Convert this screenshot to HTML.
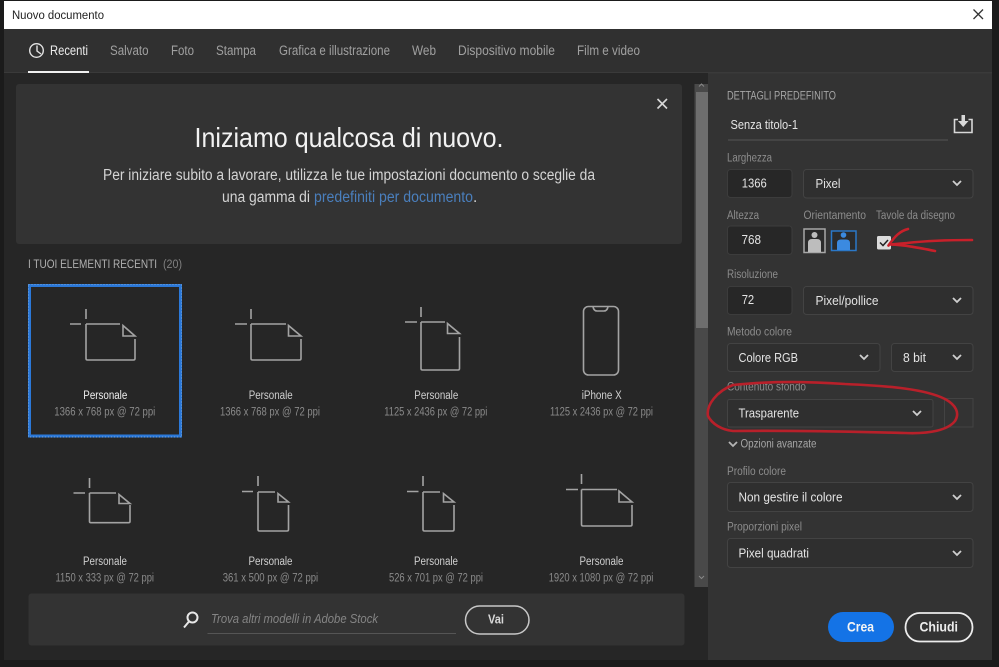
<!DOCTYPE html>
<html lang="it"><head><meta charset="utf-8"><title>Nuovo documento</title>
<style>
html,body{margin:0;padding:0;background:#1b1b1b;width:999px;height:667px;overflow:hidden}
svg{display:block;filter:blur(.3px)}
text{font-family:"Liberation Sans",sans-serif}
.tab{font-size:13.5px;fill:#a0a0a0}
.lab{font-size:11.5px;fill:#8c8c8c}
.val{font-size:13px;fill:#e4e4e4}
.nm{font-size:11.5px;fill:#cfcfcf}
.sz{font-size:11.5px;fill:#8a8a8a}
.ic{fill:none;stroke:#a3a3a3;stroke-width:1.6}
.chev{fill:none;stroke:#cfcfcf;stroke-width:1.8}
.inp{fill:#272727;stroke:#3c3c3c}
.sel{fill:#2f2f2f;stroke:#434343}
</style></head><body>
<svg width="999" height="667" viewBox="0 0 999 667" xmlns="http://www.w3.org/2000/svg">
<rect width="999" height="667" fill="#1b1b1b"/>
<!-- title bar -->
<rect x="4" y="1" width="988" height="28" fill="#fff"/>
<text x="12" y="19" font-size="11.500" fill="#222" textLength="92" lengthAdjust="spacingAndGlyphs">Nuovo documento</text>
<path d="M973.500 9.500 983 19M983 9.500 973.500 19" stroke="#333" stroke-width="1.300" fill="none"/>
<!-- tab bar -->
<rect x="4" y="29" width="988" height="43" fill="#303030"/>
<rect x="4" y="72" width="988" height="1.500" fill="#3a3a3a"/>
<rect x="4" y="73" width="704" height="587" fill="#262626"/>
<circle cx="36.500" cy="50.500" r="6.800" fill="none" stroke="#e2e2e2" stroke-width="1.400"/>
<path d="M37 45.500V51L41 54" fill="none" stroke="#e2e2e2" stroke-width="1.400"/>
<text x="50" y="55" class="tab" style="fill:#ececec" textLength="38" lengthAdjust="spacingAndGlyphs">Recenti</text>
<text x="110" y="55" class="tab" textLength="38.500" lengthAdjust="spacingAndGlyphs">Salvato</text>
<text x="171" y="55" class="tab" textLength="23" lengthAdjust="spacingAndGlyphs">Foto</text>
<text x="216" y="55" class="tab" textLength="40" lengthAdjust="spacingAndGlyphs">Stampa</text>
<text x="279" y="55" class="tab" textLength="111" lengthAdjust="spacingAndGlyphs">Grafica e illustrazione</text>
<text x="412" y="55" class="tab" textLength="24" lengthAdjust="spacingAndGlyphs">Web</text>
<text x="458" y="55" class="tab" textLength="97" lengthAdjust="spacingAndGlyphs">Dispositivo mobile</text>
<text x="577" y="55" class="tab" textLength="63" lengthAdjust="spacingAndGlyphs">Film e video</text>
<rect x="28" y="71" width="61" height="2" fill="#f0f0f0"/>
<!-- hero -->
<rect x="16" y="84" width="666" height="160" rx="3" fill="#333"/>
<path d="M657.500 99 667 108.500M667 99 657.500 108.500" stroke="#d8d8d8" stroke-width="1.600" fill="none"/>
<text x="194.500" y="147" font-size="28" fill="#f2f2f2" textLength="309" lengthAdjust="spacingAndGlyphs">Iniziamo qualcosa di nuovo.</text>
<text x="103" y="180" font-size="15.500" fill="#d4d4d4" textLength="492" lengthAdjust="spacingAndGlyphs">Per iniziare subito a lavorare, utilizza le tue impostazioni documento o sceglie da</text>
<text x="222" y="202" font-size="15.500" fill="#d4d4d4" textLength="88" lengthAdjust="spacingAndGlyphs">una gamma di</text>
<text x="314" y="202" font-size="15.500" fill="#4a7fbd" textLength="159" lengthAdjust="spacingAndGlyphs">predefiniti per documento</text>
<text x="473" y="202" font-size="15.500" fill="#d4d4d4">.</text>
<!-- recent heading -->
<text x="28" y="268" font-size="11.500" fill="#b0b0b0" textLength="129" lengthAdjust="spacingAndGlyphs">I TUOI ELEMENTI RECENTI</text>
<text x="163" y="268" font-size="11.500" fill="#808080" textLength="19" lengthAdjust="spacingAndGlyphs">(20)</text>
<!-- selected -->
<rect x="29.500" y="285.500" width="151" height="150.500" fill="none" stroke="#2b78d8" stroke-width="3"/>
<rect x="28.500" y="284.500" width="153" height="152.500" fill="none" stroke="#7aa6d8" stroke-width="1" stroke-dasharray="1 2"/>
<!-- icons -->
<g class="ic">
<path d="M86 309V319M70 324H81M86 324H120M86 324V358.500Q86 360 87.500 360H133.500Q135 360 135 358.500V339M123 325.500V336H135Z"/>
<path d="M251 309V319M235 324H247M251 324H286M251 324V358.500Q251 360 252.500 360H299.500Q301 360 301 358.500V339M288.500 325.500V336H301Z"/>
<path d="M421 307V317M405 322H417M421 322H445M421 322V368.500Q421 370 422.500 370H458Q459.500 370 459.500 368.500V337M447.500 323.500V333.500H459.500Z"/>
<rect x="583.500" y="306.500" width="35" height="68.500" rx="5"/>
<path d="M593 307Q594 311 597 311H604Q607 311 608 307"/>
<path d="M89.500 478V488M73.500 493H85M89.500 493H116M89.500 493V521.500Q89.500 522.700 91 522.700H128.500Q130 522.700 130 521.500V505M119 494.500V503.500H130Z"/>
<path d="M258 476V486M242 491.500H253M258 492H275M258 492V529.500Q258 531 259.500 531H287Q288.500 531 288.500 529.500V505M278 493.500V502H288.500Z"/>
<path d="M423 476V486M407 491.500H418.500M423 492H440M423 492V529.500Q423 531 424.500 531H452.500Q454 531 454 529.500V505M443.500 493.500V502H454Z"/>
<path d="M581.500 474V484M566 489.500H578M581.500 489.500H617M581.500 489.500V524.500Q581.500 526 583 526H630.500Q632 526 632 524.500V505M619 491V502H632Z"/>
</g>
<!-- labels row 1 -->
<text x="83.300" y="399" class="nm" style="fill:#eee" textLength="44" lengthAdjust="spacingAndGlyphs">Personale</text>
<text x="54.300" y="415.700" class="sz" textLength="101" lengthAdjust="spacingAndGlyphs">1366 x 768 px @ 72 ppi</text>
<text x="248.700" y="399" class="nm" textLength="44" lengthAdjust="spacingAndGlyphs">Personale</text>
<text x="220" y="415.700" class="sz" textLength="100" lengthAdjust="spacingAndGlyphs">1366 x 768 px @ 72 ppi</text>
<text x="414.300" y="399" class="nm" textLength="44" lengthAdjust="spacingAndGlyphs">Personale</text>
<text x="384.300" y="415.700" class="sz" textLength="103" lengthAdjust="spacingAndGlyphs">1125 x 2436 px @ 72 ppi</text>
<text x="581.700" y="399" class="nm" textLength="40" lengthAdjust="spacingAndGlyphs">iPhone X</text>
<text x="550" y="415.700" class="sz" textLength="103" lengthAdjust="spacingAndGlyphs">1125 x 2436 px @ 72 ppi</text>
<!-- labels row 2 -->
<text x="83" y="565" class="nm" textLength="44" lengthAdjust="spacingAndGlyphs">Personale</text>
<text x="55.500" y="581.600" class="sz" textLength="98.500" lengthAdjust="spacingAndGlyphs">1150 x 333 px @ 72 ppi</text>
<text x="248.500" y="565" class="nm" textLength="44" lengthAdjust="spacingAndGlyphs">Personale</text>
<text x="222.700" y="581.600" class="sz" textLength="95.500" lengthAdjust="spacingAndGlyphs">361 x 500 px @ 72 ppi</text>
<text x="414" y="565" class="nm" textLength="44" lengthAdjust="spacingAndGlyphs">Personale</text>
<text x="389" y="581.600" class="sz" textLength="94" lengthAdjust="spacingAndGlyphs">526 x 701 px @ 72 ppi</text>
<text x="579.500" y="565" class="nm" textLength="44" lengthAdjust="spacingAndGlyphs">Personale</text>
<text x="548.700" y="581.600" class="sz" textLength="104.700" lengthAdjust="spacingAndGlyphs">1920 x 1080 px @ 72 ppi</text>
<!-- scrollbar -->
<rect x="694.500" y="84" width="13.500" height="503" fill="#494949"/>
<rect x="696" y="92" width="12" height="236" fill="#6e6e6e"/>
<path d="M699 86.500 701.500 84 704 86.500M699 576 701.500 578.500 704 576" fill="none" stroke="#888" stroke-width="1"/>
<!-- search -->
<rect x="28.500" y="593.500" width="656" height="52" rx="3" fill="#333"/>
<circle cx="192.500" cy="617.500" r="5" fill="none" stroke="#e8e8e8" stroke-width="2"/>
<path d="M189 621.500 184 627.500" stroke="#e8e8e8" stroke-width="2" fill="none"/>
<text x="211" y="623" font-size="13" font-style="italic" fill="#858585" textLength="167" lengthAdjust="spacingAndGlyphs">Trova altri modelli in Adobe Stock</text>
<rect x="207.500" y="633" width="248.500" height="1" fill="#555"/>
<rect x="465.500" y="606" width="63.500" height="28" rx="14" fill="none" stroke="#c8c8c8" stroke-width="1.500"/>
<text x="488" y="623.500" font-size="12.500" font-weight="bold" fill="#d8d8d8" textLength="16" lengthAdjust="spacingAndGlyphs">Vai</text>
<!-- right panel -->
<rect x="708" y="73.500" width="284" height="586.500" fill="#333"/>
<text x="727" y="99.500" class="lab" style="fill:#a6a6a6" textLength="109" lengthAdjust="spacingAndGlyphs">DETTAGLI PREDEFINITO</text>
<text x="730.500" y="129" class="val" textLength="67.500" lengthAdjust="spacingAndGlyphs">Senza titolo-1</text>
<rect x="728" y="139.500" width="220" height="1" fill="#555"/>
<path d="M958 119.500H954.500V132.500H972V119.500H968.500" fill="none" stroke="#d8d8d8" stroke-width="1.600"/>
<path d="M961.500 115H965V121H968.500L963.200 127 958 121H961.500Z" fill="#d8d8d8"/>

<text x="727" y="161.700" class="lab" textLength="45" lengthAdjust="spacingAndGlyphs">Larghezza</text>
<rect x="727.500" y="169.500" width="64.500" height="28" rx="3" class="inp"/>
<text x="741.700" y="187.500" class="val" textLength="25" lengthAdjust="spacingAndGlyphs">1366</text>
<rect x="803.500" y="169.500" width="169.500" height="28.500" rx="3" class="sel"/>
<text x="815.500" y="188" class="val" textLength="25" lengthAdjust="spacingAndGlyphs">Pixel</text>
<path d="M953 181 957 185 961 181" class="chev"/>

<text x="727" y="219" class="lab" textLength="32" lengthAdjust="spacingAndGlyphs">Altezza</text>
<text x="803.500" y="219" class="lab" textLength="62.500" lengthAdjust="spacingAndGlyphs">Orientamento</text>
<text x="876" y="219" class="lab" textLength="79" lengthAdjust="spacingAndGlyphs">Tavole da disegno</text>
<rect x="727.500" y="226" width="64.500" height="28.500" rx="3" class="inp"/>
<text x="741.500" y="244" class="val" textLength="19.500" lengthAdjust="spacingAndGlyphs">768</text>
<rect x="804" y="229" width="21" height="23.500" fill="#2b2b2b" stroke="#a8a8a8" stroke-width="1.500"/>
<circle cx="814.500" cy="235" r="3" fill="#bdbdbd"/>
<path d="M808 252V243Q808 239 812 239H817Q821 239 821 243V252Z" fill="#bdbdbd"/>
<rect x="831.500" y="231" width="24.500" height="19.500" fill="#2b2b2b" stroke="#2b78c8" stroke-width="1.500"/>
<circle cx="843.500" cy="235" r="2.800" fill="#3b8ae0"/>
<path d="M837 250V243Q837 239.500 841 239.500H846Q850 239.500 850 243V250Z" fill="#3b8ae0"/>
<rect x="877" y="236" width="14" height="13.500" rx="1.500" fill="#dcdcdc"/>
<path d="M880 242.500 883 245.500 888 240" fill="none" stroke="#222" stroke-width="1.500"/>
<path d="M972 240C950 240 925 241 907 243L890 244.500M908 229C900 231 895 236 888.500 245.500M890 244.500C905 245 920 248 935 251" fill="none" stroke="#c8202a" stroke-width="2.600" stroke-linecap="round" stroke-linejoin="round"/>

<text x="727" y="278" class="lab" textLength="51" lengthAdjust="spacingAndGlyphs">Risoluzione</text>
<rect x="727.500" y="286.500" width="64.500" height="28" rx="3" class="inp"/>
<text x="741.700" y="304" class="val" textLength="12.500" lengthAdjust="spacingAndGlyphs">72</text>
<rect x="803.500" y="286.500" width="169.500" height="28" rx="3" class="sel"/>
<text x="815.500" y="305" class="val" textLength="63" lengthAdjust="spacingAndGlyphs">Pixel/pollice</text>
<path d="M953 298 957 302 961 298" class="chev"/>

<text x="727" y="335.700" class="lab" textLength="65" lengthAdjust="spacingAndGlyphs">Metodo colore</text>
<rect x="727.500" y="343.500" width="152.500" height="28" rx="3" class="sel"/>
<text x="738.500" y="362" class="val" textLength="59.500" lengthAdjust="spacingAndGlyphs">Colore RGB</text>
<path d="M860 355 864 359 868 355" class="chev"/>
<rect x="891.500" y="343.500" width="81.500" height="28" rx="3" class="sel"/>
<text x="903" y="362" class="val" textLength="23" lengthAdjust="spacingAndGlyphs">8 bit</text>
<path d="M953 355 957 359 961 355" class="chev"/>

<text x="727" y="390.700" class="lab" textLength="79" lengthAdjust="spacingAndGlyphs">Contenuto sfondo</text>
<rect x="727.500" y="399.500" width="205.500" height="27.500" rx="2" class="sel"/>
<text x="738.500" y="417.500" class="val" textLength="60.500" lengthAdjust="spacingAndGlyphs">Trasparente</text>
<path d="M913 411 917 415 921 411" class="chev"/>
<rect x="944.500" y="398.500" width="28.500" height="28.500" class="sel" style="fill:#333"/>
<path d="M733 385C760 382 800 381 845 384C890 386 925 389 945 399C956 405 960 413 955 421C948 430 930 434 905 433C860 432 800 430 733 431C722 430 712 424 708 416C706 405 717 391 733 385Z" fill="none" stroke="#b8202a" stroke-width="2.600"/>
<path d="M729 442 733 446 737 442" class="chev" style="stroke:#b5b5b5"/>
<text x="740.500" y="447.700" class="lab" style="fill:#a6a6a6" textLength="76" lengthAdjust="spacingAndGlyphs">Opzioni avanzate</text>

<text x="727" y="475" class="lab" textLength="59" lengthAdjust="spacingAndGlyphs">Profilo colore</text>
<rect x="727.500" y="482.500" width="245.500" height="29" rx="3" class="sel"/>
<text x="738.500" y="501.500" class="val" textLength="104" lengthAdjust="spacingAndGlyphs">Non gestire il colore</text>
<path d="M953 495 957 499 961 495" class="chev"/>

<text x="727" y="530.500" class="lab" textLength="75" lengthAdjust="spacingAndGlyphs">Proporzioni pixel</text>
<rect x="727.500" y="538.500" width="245.500" height="29" rx="3" class="sel"/>
<text x="738.500" y="557.500" class="val" textLength="70.500" lengthAdjust="spacingAndGlyphs">Pixel quadrati</text>
<path d="M953 551 957 555 961 551" class="chev"/>

<rect x="828" y="612" width="66" height="30" rx="15" fill="#1473e6"/>
<text x="847" y="631.500" font-size="13.500" font-weight="bold" fill="#f4f4f4" textLength="27" lengthAdjust="spacingAndGlyphs">Crea</text>
<rect x="905.500" y="613" width="67" height="28.500" rx="14.250" fill="none" stroke="#ececec" stroke-width="1.800"/>
<text x="919.500" y="631.500" font-size="13.500" font-weight="bold" fill="#ececec" textLength="38.500" lengthAdjust="spacingAndGlyphs">Chiudi</text>
</svg>
</body></html>
